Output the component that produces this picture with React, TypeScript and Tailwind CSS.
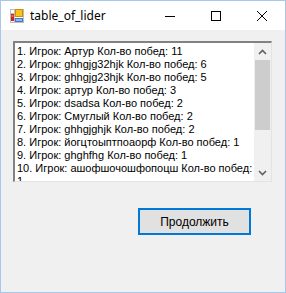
import React from "react";

const items = [
  "1. Игрок: Артур Кол-во побед: 11",
  "2. Игрок: ghhgjg32hjk Кол-во побед: 6",
  "3. Игрок: ghhgjg23hjk Кол-во побед: 5",
  "4. Игрок: артур Кол-во побед: 3",
  "5. Игрок: dsadsa Кол-во побед: 2",
  "6. Игрок: Смуглый Кол-во побед: 2",
  "7. Игрок: ghhgjghjk Кол-во побед: 2",
  "8. Игрок: йогцтоыптпоаорф Кол-во побед: 1",
  "9. Игрок: ghghfhg Кол-во побед: 1",
  "10. Игрок: ашофшочошфопоцш Кол-во побед: 1",
];

function AppIcon() {
  return (
    <svg width="14" height="14" viewBox="0 0 14 14">
      <rect x="0.5" y="0.5" width="13" height="13" fill="#ffffff" stroke="#bdbdbd" />
      <line x1="0" y1="4.5" x2="4" y2="4.5" stroke="#bdbdbd" />
      <line x1="4.5" y1="0" x2="4.5" y2="14" stroke="#bdbdbd" />
      <rect x="1" y="5" width="3" height="7" fill="#d32020" />
      <rect x="1.5" y="6.5" width="2" height="1" fill="#f5b0b0" />
      <rect x="5.5" y="0.5" width="7" height="7" fill="#f7c21b" stroke="#d88a00" />
      <rect x="5" y="9" width="8" height="4" fill="#3a7bd5" />
      <rect x="6" y="10" width="6" height="2" fill="#8fb8ee" />
    </svg>
  );
}

export default function App() {
  return (
    <div className="w-[286px] h-[293px] border border-[#a6c9ea] bg-[#f0f0f0] flex flex-col overflow-hidden">
      {/* Title bar */}
      <div className="h-[29px] bg-white flex items-center shrink-0">
        <div className="ml-[9px] mt-[1px] flex items-center">
          <AppIcon />
        </div>
        <div
          className="ml-[6px] text-[12px] text-black leading-none"
          style={{ fontFamily: '"Segoe UI", "Noto Sans", "Open Sans", sans-serif' }}
        >
          table_of_lider
        </div>
        <div className="ml-auto flex h-full">
          <div className="w-[46px] h-full flex items-center justify-center">
            <svg width="10" height="10" viewBox="0 0 10 10">
              <line x1="0" y1="5.5" x2="10" y2="5.5" stroke="#000" strokeWidth="1" />
            </svg>
          </div>
          <div className="w-[46px] h-full flex items-center justify-center">
            <svg width="10" height="10" viewBox="0 0 10 10">
              <rect x="0.5" y="0.5" width="9" height="9" fill="none" stroke="#000" strokeWidth="1" />
            </svg>
          </div>
          <div className="w-[46px] h-full flex items-center justify-center">
            <svg width="10" height="10" viewBox="0 0 10 10">
              <line x1="0" y1="0" x2="10" y2="10" stroke="#000" strokeWidth="1" />
              <line x1="10" y1="0" x2="0" y2="10" stroke="#000" strokeWidth="1" />
            </svg>
          </div>
        </div>
      </div>

      {/* Client area */}
      <div className="flex-1 flex flex-col pl-[12px] pt-[11px]">
        <div className="w-[259px] h-[141px] flex border-t-2 border-l-2 border-t-[#828282] border-l-[#828282] border-r border-b border-r-[#e3e3e3] border-b-[#e3e3e3] bg-white overflow-hidden">
          <div
            className="flex-1 overflow-hidden pl-[2px] pt-[2px] text-[11px] leading-[13px] text-black"
            style={{ fontFamily: '"Liberation Sans", Arial, sans-serif' }}
          >
            {items.map((t) => (
              <div key={t}>{t}</div>
            ))}
          </div>
          <div className="w-[17px] bg-[#f0f0f0] flex flex-col shrink-0">
            <div className="h-[17px] flex items-center justify-center">
              <svg width="9" height="6" viewBox="0 0 9 6">
                <path d="M1 5 L4.5 1.5 L8 5" fill="none" stroke="#606060" strokeWidth="1.6" />
              </svg>
            </div>
            <div className="mx-[1px] h-[70px] bg-[#cdcdcd]" />
            <div className="flex-1" />
            <div className="h-[17px] flex items-center justify-center">
              <svg width="9" height="6" viewBox="0 0 9 6">
                <path d="M1 1 L4.5 4.5 L8 1" fill="none" stroke="#606060" strokeWidth="1.6" />
              </svg>
            </div>
          </div>
        </div>

        <div className="mt-[26px] ml-[125px]">
          <button
            className="w-[113px] h-[27px] bg-[#e1e1e1] border-2 border-[#0078d7] text-[12px] text-black flex items-center justify-center"
            style={{ fontFamily: '"Liberation Sans", Arial, sans-serif' }}
          >
            Продолжить
          </button>
        </div>
      </div>
    </div>
  );
}
